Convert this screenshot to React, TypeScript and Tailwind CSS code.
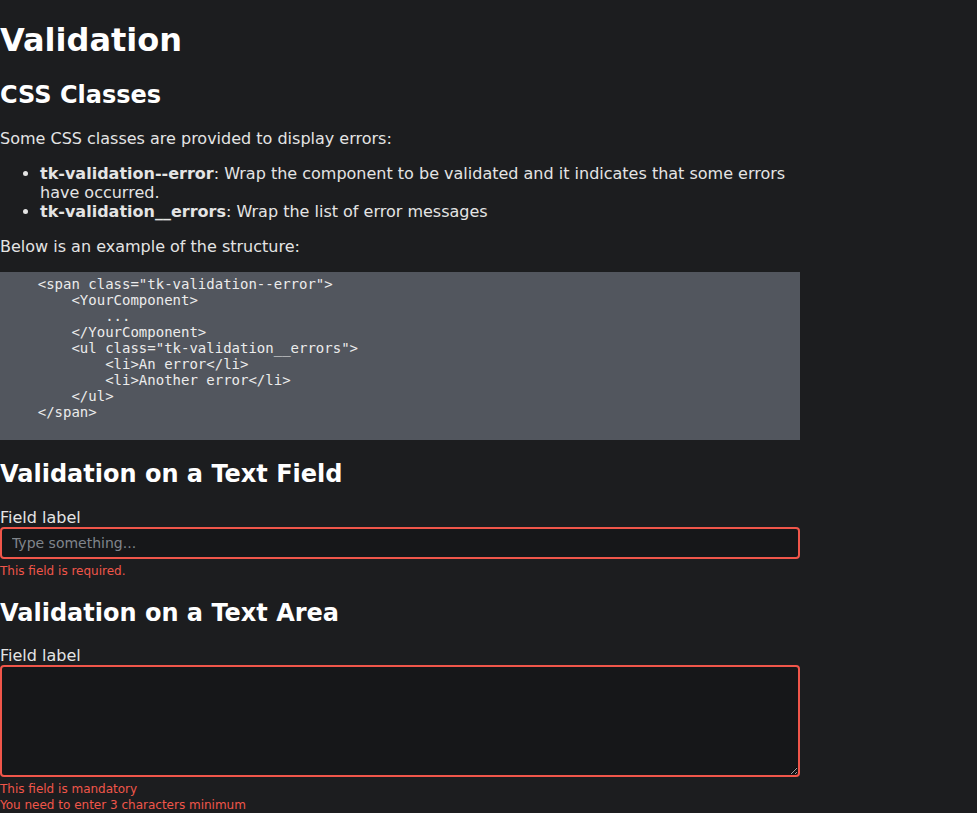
import React from 'react';

const code = `    <span class="tk-validation--error">
        <YourComponent>
            ...
        </YourComponent>
        <ul class="tk-validation__errors">
            <li>An error</li>
            <li>Another error</li>
        </ul>
    </span>`;

const FieldErrors: React.FC<{ errors: string[] }> = ({ errors }) => (
  <ul className="mt-1 text-[12px] leading-[16px] text-[#f0564a]">
    {errors.map((e) => (
      <li key={e}>{e}</li>
    ))}
  </ul>
);

export default function App() {
  return (
    <div className="min-h-[813px] bg-[#1c1d1f] text-[#e4e4e4] font-['DejaVu_Sans',sans-serif] text-[16px] leading-[normal] overflow-hidden">
      <div className="w-[800px] pt-[21.44px] pb-2">
        <h1 className="text-[32px] font-bold text-white mb-[21.44px]">Validation</h1>

        <h2 className="text-[24px] font-bold text-white mb-[19.92px]">CSS Classes</h2>
        <p>Some CSS classes are provided to display errors:</p>
        <ul className="list-disc pl-10 my-4">
          <li>
            <strong className="font-bold">tk-validation--error</strong>: Wrap the component to be validated and it indicates that some errors have occurred.
          </li>
          <li>
            <strong className="font-bold">tk-validation__errors</strong>: Wrap the list of error messages
          </li>
        </ul>
        <p>Below is an example of the structure:</p>

        <pre className="mt-4 bg-[#52565e] text-[#ececec] font-['DejaVu_Sans_Mono',monospace] text-[14px] leading-[16px] pt-1 pb-5 pl-[4px] whitespace-pre">
          {code}
        </pre>

        <h2 className="text-[24px] font-bold text-white mt-[19.92px] mb-[19.92px]">Validation on a Text Field</h2>
        <label className="block">Field label</label>
        <input
          type="text"
          placeholder="Type something..."
          className="block w-[800px] h-8 rounded-[4px] border-2 border-[#f0564a] bg-[#161719] px-[10px] text-[14px] text-white placeholder:text-[#80858c] outline-none"
        />
        <FieldErrors errors={['This field is required.']} />

        <h2 className="text-[24px] font-bold text-white mt-[19.92px] mb-[19.92px]">Validation on a Text Area</h2>
        <label className="block">Field label</label>
        <textarea className="block w-[800px] h-[112px] rounded-[4px] border-2 border-[#f0564a] bg-[#161719] px-[10px] py-1 text-[14px] text-white outline-none" />
        <FieldErrors errors={['This field is mandatory', 'You need to enter 3 characters minimum']} />
      </div>
    </div>
  );
}
